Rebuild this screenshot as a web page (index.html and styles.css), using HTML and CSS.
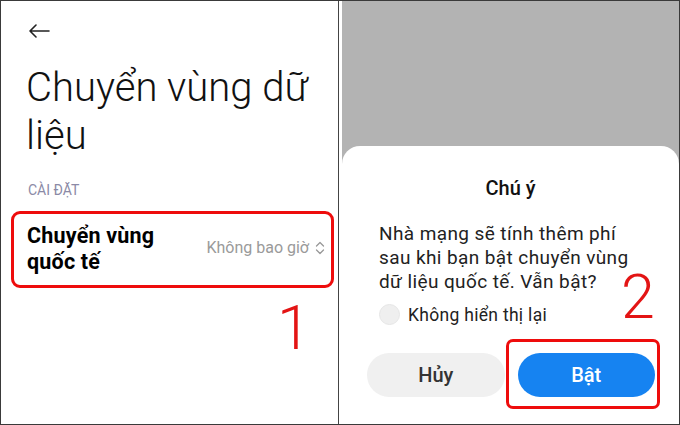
FILE: index.html
```html
<!DOCTYPE html>
<html lang="vi">
<head>
<meta charset="utf-8">
<link rel="stylesheet" href="styles.css">
</head>
<body>
<div class="frame">
  <section class="left">
    <div class="back">
      <svg width="22" height="14" viewBox="0 0 22 14"><path d="M21 7H2M8 1L2 7l6 6" fill="none" stroke="#222" stroke-width="1.6" stroke-linecap="round" stroke-linejoin="round"/></svg>
    </div>
    <h1 class="title">Chuyển vùng dữ<br>liệu</h1>
    <div class="section">CÀI ĐẶT</div>
    <div class="row">
      <div class="row-label">Chuyển vùng<br>quốc tế</div>
      <div class="row-value">Không bao giờ
        <svg width="10" height="14" viewBox="0 0 10 14"><path d="M1.5 5L5 1.5 8.5 5M1.5 9L5 12.5 8.5 9" fill="none" stroke="#999" stroke-width="1.3" stroke-linecap="round" stroke-linejoin="round"/></svg>
      </div>
    </div>
    <div class="mark mark-1">1</div>
  </section>
  <div class="divider"></div>
  <section class="right">
    <div class="sheet">
      <div class="sheet-title">Chú ý</div>
      <p class="sheet-text">Nhà mạng sẽ tính thêm phí<br>sau khi bạn bật chuyển vùng<br>dữ liệu quốc tế. Vẫn bật?</p>
      <div class="check"><span class="radio"></span><span>Không hiển thị lại</span></div>
      <div class="buttons">
        <button class="btn btn-cancel">Hủy</button>
        <button class="btn btn-ok">Bật</button>
      </div>
      <div class="mark mark-2">2</div>
      <div class="highlight"></div>
    </div>
  </section>
</div>
</body>
</html>
```

FILE: styles.css
```css
* { box-sizing: border-box; }
html, body { margin: 0; padding: 0; }
body { font-family: Roboto, "Noto Sans", sans-serif; background: #fff; }

.frame {
  width: 680px;
  height: 425px;
  border: 1px solid #3a3a3a;
  display: flex;
  overflow: hidden;
}

.left {
  position: relative;
  width: 337px;
  background: #fff;
  display: flex;
  flex-direction: column;
}

.back {
  margin: 23px 0 0 27px;
  height: 14px;
  line-height: 0;
}

.title {
  margin: 26px 0 0 25px;
  font-size: 40px;
  line-height: 48px;
  font-weight: 300;
  color: #111;
}

.section {
  margin: 22px 0 0 27px;
  font-size: 14px;
  line-height: 16px;
  color: #8b8aa6;
}

.row {
  margin: 13px 0 0 10px;
  width: 323px;
  height: 77px;
  border: 3px solid #ee0c0c;
  border-radius: 9px;
  display: flex;
  align-items: center;
  justify-content: space-between;
  padding: 0 6px 0 13px;
}

.row-label {
  font-size: 21.5px;
  line-height: 26px;
  font-weight: 700;
  letter-spacing: 0.2px;
  color: #000;
  margin-top: -2px;
}

.row-value {
  font-size: 16px;
  color: #9a9a9a;
  display: flex;
  align-items: center;
  gap: 6px;
  margin-top: -4px;
}

.mark {
  position: absolute;
  color: #e31414;
  font-weight: 300;
  line-height: 1;
}
.mark-1 { left: 276px; top: 297px; font-size: 61px; }
.mark-2 { left: 279px; top: 121px; font-size: 61px; }

.divider {
  width: 4px;
  border-left: 1px solid #444;
  background: #fff;
}

.right {
  flex: 1;
  background: #b3b3b3;
  display: flex;
  flex-direction: column;
  justify-content: flex-end;
}

.sheet {
  position: relative;
  height: 278px;
  background: #fff;
  border-radius: 18px 18px 0 0;
  display: flex;
  flex-direction: column;
}

.sheet-title {
  margin-top: 30px;
  text-align: center;
  font-size: 20px;
  line-height: 24px;
  font-weight: 500;
  color: #111;
}

.sheet-text {
  margin: 22px 0 0 37px;
  font-size: 19px;
  line-height: 23.8px;
  letter-spacing: 0.4px;
  color: #222;
}

.check {
  margin: 11px 0 0 37px;
  display: flex;
  align-items: center;
  gap: 8px;
  font-size: 17.5px;
  letter-spacing: 0.3px;
  color: #222;
}

.radio {
  width: 21px;
  height: 21px;
  border-radius: 50%;
  background: #efefef;
  border: 1px solid #e6e6e6;
}

.buttons {
  margin: 28px 24px 0 25px;
  display: flex;
  gap: 13px;
}

.btn {
  flex: 1;
  height: 44px;
  border: none;
  border-radius: 22px;
  font-family: Roboto, "Noto Sans", sans-serif;
  font-size: 20px;
  font-weight: 500;
}
.btn-cancel { background: #f0f0f0; color: #333; }
.btn-ok { background: #1683f1; color: #fff; }

.highlight {
  position: absolute;
  left: 164px;
  top: 193px;
  width: 154px;
  height: 70px;
  border: 3px solid #ee0c0c;
  border-radius: 7px;
}
```
